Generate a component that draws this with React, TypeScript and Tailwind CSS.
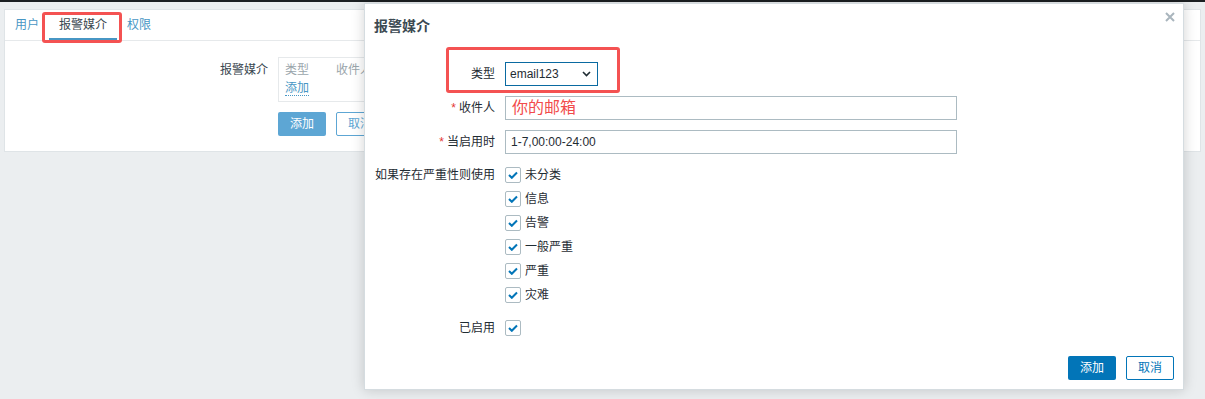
import React from 'react'

const severities = ['未分类', '信息', '告警', '一般严重', '严重', '灾难']

const Check = () => (
  <span className="flex h-[16px] w-[16px] items-center justify-center rounded-[2px] border border-[#acbbc2] bg-white">
    <svg width="10" height="8" viewBox="0 0 10 8" fill="none">
      <path d="M1 4l2.8 2.8L9 1.5" stroke="#0275b8" strokeWidth="2" />
    </svg>
  </span>
)

const Label = ({ children, required }: { children: React.ReactNode; required?: boolean }) => (
  <div className="flex h-[24px] items-center justify-end text-[#1f2c33]">
    {required && <span className="mr-[3px] text-[#e33734]">*</span>}
    {children}
  </div>
)

export default function App() {
  return (
    <div className="relative h-[399px] w-[1205px] overflow-hidden bg-[#ebeef0] font-['Liberation_Sans','Noto_Sans_CJK_SC',sans-serif] text-[12px]">
      <div className="h-[2px] bg-[#1b1f22]" />

      {/* page behind the dialog */}
      <div className="ml-[4px] mt-[7px] h-[143px] w-[1197px] border border-[#dfe4e7] bg-white">
        <div className="flex h-[31px] items-stretch border-b border-[#e6e9eb]">
          <div className="flex items-center px-[10px] text-[#4796c4]">用户</div>
          <div className="flex items-center border-b-2 border-[#4796c4] px-[10px] pt-[2px] text-[#3a4750]">报警媒介</div>
          <div className="flex items-center px-[10px] text-[#4796c4]">权限</div>
        </div>
        <div className="grid grid-cols-[263px_auto] gap-x-[10px] pt-[16px]">
          <div className="pt-[4px] text-right text-[#3a4750]">报警媒介</div>
          <div className="h-[45px] w-[320px] border border-[#e6e9eb] px-[6px] pt-[3px]">
            <div className="flex text-[#9aa5ab]">
              <span className="w-[51px]">类型</span>
              <span>收件人</span>
            </div>
            <span className="border-b border-dotted border-[#4796c4] text-[#4796c4]">添加</span>
          </div>
          <div />
          <div className="mt-[10px] flex gap-[10px]">
            <button className="h-[24px] w-[48px] rounded-[2px] bg-[#5da6d4] text-white">添加</button>
            <button className="h-[24px] w-[48px] rounded-[2px] border border-[#5da6d4] bg-white text-[#5da6d4]">取消</button>
          </div>
        </div>
      </div>

      {/* dialog */}
      <div className="absolute left-[364px] top-[3px] flex h-[387px] w-[820px] flex-col border border-[#d5dce0] bg-white px-[9px] pb-[9px] shadow-[0_0_12px_rgba(0,0,0,0.18)]">
        <div className="mt-[12px] flex h-[20px] items-center justify-between">
          <span className="text-[14px] font-bold text-[#3c4a53]">报警媒介</span>
          <svg width="10" height="10" viewBox="0 0 10 10" className="-mr-[1px] -mt-[18px]">
            <path d="M1 1l8 8M9 1l-8 8" stroke="#a9b5bd" strokeWidth="2" />
          </svg>
        </div>

        <div className="mt-[26px] grid grid-cols-[121px_auto] gap-x-[10px]">
          <Label>类型</Label>
          <div className="flex h-[24px] w-[93px] items-center justify-between border border-[#0a6aa1] pl-[4px] pr-[6px] text-[#1f2c33]">
            <span>email123</span>
            <svg width="9" height="6" viewBox="0 0 9 6" fill="none">
              <path d="M1 1l3.5 3.5L8 1" stroke="#1f2c33" strokeWidth="1.6" />
            </svg>
          </div>

          <div className="col-span-2 h-[10px]" />
          <Label required>收件人</Label>
          <div className="flex h-[24px] w-[452px] items-center border border-[#acbbc2] px-[6px] text-[16px] text-[#f24b4b]">你的邮箱</div>

          <div className="col-span-2 h-[10px]" />
          <Label required>当启用时</Label>
          <div className="flex h-[24px] w-[452px] items-center border border-[#acbbc2] px-[5px] text-[#1f2c33]">1-7,00:00-24:00</div>

          <div className="col-span-2 h-[9px]" />
          <div className="flex h-[24px] items-center justify-end whitespace-nowrap text-[#1f2c33]">如果存在严重性则使用</div>
          <div className="flex flex-col">
            {severities.map((s) => (
              <div key={s} className="flex h-[24px] items-center gap-[4px] text-[#1f2c33]">
                <Check />
                <span>{s}</span>
              </div>
            ))}
          </div>

          <div className="col-span-2 h-[9px]" />
          <Label>已启用</Label>
          <div className="flex h-[24px] items-center">
            <Check />
          </div>
        </div>

        <div className="mt-auto flex justify-end gap-[10px]">
          <button className="h-[24px] w-[48px] rounded-[2px] bg-[#0275b8] text-white">添加</button>
          <button className="h-[24px] w-[48px] rounded-[2px] border border-[#0275b8] bg-white text-[#0275b8]">取消</button>
        </div>
      </div>

      {/* red annotation boxes */}
      <div className="absolute left-[42px] top-[12px] h-[31px] w-[80px] rounded-[3px] border-[3px] border-[#f45252]" />
      <div className="absolute left-[446px] top-[47px] h-[46px] w-[174px] rounded-[3px] border-[3px] border-[#f45252]" />
    </div>
  )
}
